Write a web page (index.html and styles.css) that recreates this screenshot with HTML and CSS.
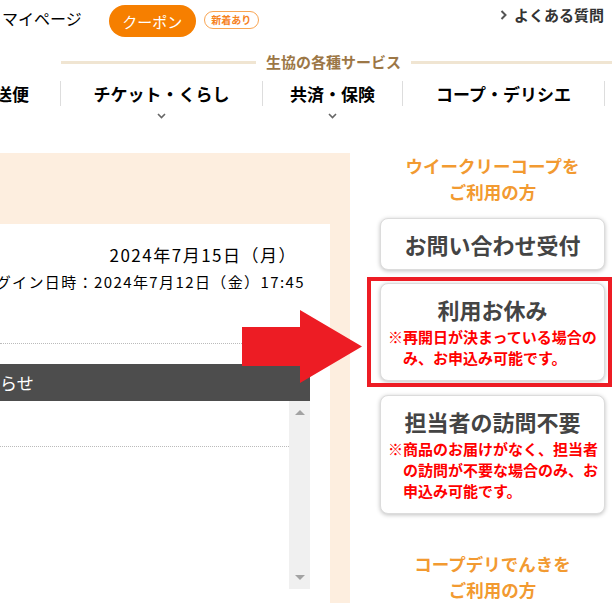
FILE: index.html
```html
<!DOCTYPE html>
<html lang="ja">
<head>
<meta charset="utf-8">
<title>マイページ</title>
<link rel="stylesheet" href="styles.css">
</head>
<body>
<header class="site-header">
  <div class="top">
    <a class="mypage" href="#">マイページ</a>
    <a class="coupon" href="#">クーポン</a>
    <span class="badge">新着あり</span>
    <a class="faq" href="#"><svg class="faq-chev" width="7" height="10" viewBox="0 0 7 10"><polyline points="1.5,1 5.5,5 1.5,9" fill="none" stroke="#555" stroke-width="2"/></svg>よくある質問</a>
  </div>
  <div class="svc-head">
    <span class="svc-line l"></span>
    <span class="svc-title">生協の各種サービス</span>
    <span class="svc-line r"></span>
  </div>
  <ul class="svc-list">
    <li class="svc cut"><span class="svc-label">配送便</span></li>
    <li class="svc w1"><span class="svc-label">チケット・くらし</span><svg class="dd" width="9" height="6" viewBox="0 0 9 6"><polyline points="1,1 4.5,4.5 8,1" fill="none" stroke="#666" stroke-width="1.6"/></svg></li>
    <li class="svc w2"><span class="svc-label">共済・保険</span><svg class="dd" width="9" height="6" viewBox="0 0 9 6"><polyline points="1,1 4.5,4.5 8,1" fill="none" stroke="#666" stroke-width="1.6"/></svg></li>
    <li class="svc w3"><span class="svc-label">コープ・デリシエ</span></li>
    <li class="svc rest"><span class="svc-label"></span></li>
  </ul>
</header>
<main class="main">
  <section class="left">
    <div class="panel">
      <div class="dates">
        <p class="date">2024年7月15日（月）</p>
        <p class="login"><span>前回ログイン日時：2024年7月12日（金）17:45</span></p>
      </div>
      <div class="news-head">お知らせ</div>
      <div class="news-body">
        <ul class="news-list">
          <li></li>
        </ul>
        <div class="scrollbar">
          <span class="sb-up"></span>
          <span class="sb-down"></span>
        </div>
      </div>
    </div>
  </section>
  <aside class="right">
    <p class="rhead">ウイークリーコープを<br>ご利用の方</p>
    <a class="card simple" href="#"><span class="card-title">お問い合わせ受付</span></a>
    <a class="card note-card first" href="#">
      <span class="card-title">利用お休み</span>
      <span class="note">※再開日が決まっている場合の<br>み、お申込み可能です。</span>
    </a>
    <a class="card note-card second" href="#">
      <span class="card-title">担当者の訪問不要</span>
      <span class="note">※商品のお届けがなく、担当者<br>の訪問が不要な場合のみ、お<br>申込み可能です。</span>
    </a>
    <p class="rhead lower">コープデリでんきを<br>ご利用の方</p>
  </aside>
  <svg class="arrow" width="120" height="73" viewBox="0 0 120 73"><polygon points="0,17 58,17 58,0 120,36.5 58,73 58,56 0,56" fill="#ed1c24"/></svg>
  <div class="highlight"></div>
</main>
</body>
</html>
```

FILE: styles.css
```css
* { box-sizing: border-box; margin: 0; padding: 0; }
html, body { width: 612px; height: 603px; overflow: hidden; }
body {
  font-family: "Noto Sans CJK JP", "Noto Sans", sans-serif;
  color: #000;
  background: #fff;
}
ul { list-style: none; }
a { color: inherit; text-decoration: none; }

.site-header { height: 153px; }

.top { display: flex; align-items: flex-start; height: 53px; }
.mypage { font-size: 16px; line-height: 20px; margin: 8px 0 0 2px; }
.coupon {
  margin: 5px 0 0 27px;
  width: 87px; height: 32px;
  border-radius: 16px;
  background: #f67f00; color: #fff;
  font-size: 15px;
  display: flex; align-items: center; justify-content: center;
}
.badge {
  margin: 11px 0 0 8px;
  width: 55px; height: 18px;
  border: 1.5px solid #f9a552; border-radius: 9px;
  color: #f6821e; font-size: 10px; font-weight: 700; line-height: 14px;
  display: flex; align-items: center; justify-content: center;
}
.faq {
  margin: 6px 8px 0 auto;
  display: flex; align-items: center; gap: 7px;
  font-size: 15px; font-weight: 700; line-height: 18px; color: #333;
}

.svc-head { display: flex; align-items: center; height: 18px; }
.svc-line { height: 3px; background: #f0e5d2; }
.svc-line.l { width: 195px; margin-left: 61px; flex: none; }
.svc-line.r { flex: 1; }
.svc-title { margin: 0 10px; font-size: 15px; font-weight: 700; color: #9c7746; line-height: 18px; white-space: nowrap; }

.svc-list { display: flex; margin-top: 10px; }
.svc { display: flex; flex-direction: column; align-items: center; flex: none; }
.svc-label {
  height: 25px; width: 100%;
  border-left: 1px solid #dddddd;
  display: flex; justify-content: center; align-items: center;
  font-size: 17px; font-weight: 700; line-height: 25px; white-space: nowrap;
}
.svc.cut { width: 60px; overflow: hidden; }
.svc.cut .svc-label { border-left: none; justify-content: flex-end; padding-right: 31px; }
.svc.w1 { width: 202px; }
.svc.w2 { width: 140px; }
.svc.w3 { width: 202px; }
.svc.rest { flex: 1; }
.dd { margin-top: 7px; display: block; }

.main { position: relative; display: flex; height: 450px; }

.left { width: 350px; flex: none; background: #fdeedf; padding: 71px 20px 0 0; }
.panel { background: #fff; height: 100%; padding-right: 20px; }
.dates { padding: 19px 0 50px; border-bottom: 1px dotted #bbbbbb; }
.date { text-align: right; padding-right: 13px; font-size: 17px; line-height: 24px; letter-spacing: 1.5px; }
.login {
  display: flex; justify-content: flex-end;
  margin-top: 4px; padding-right: 5px;
  font-size: 15px; line-height: 22px; white-space: nowrap; letter-spacing: 1.4px;
}
.news-head {
  margin-top: 20px; height: 37px;
  background: #4d4d4d; color: #fff;
  font-size: 17px; line-height: 37px;
  text-indent: -34px; white-space: nowrap; overflow: hidden;
}
.news-body { display: flex; height: 188px; }
.news-list { flex: 1; }
.news-list li { height: 46px; border-bottom: 1px dotted #bbbbbb; }
.scrollbar {
  width: 21px; background: #f0f0f0;
  display: flex; flex-direction: column; justify-content: space-between; align-items: center;
  padding: 9px 0;
}
.sb-up { width: 0; height: 0; border-left: 5px solid transparent; border-right: 5px solid transparent; border-bottom: 5px solid #a3a3a3; }
.sb-down { width: 0; height: 0; border-left: 5px solid transparent; border-right: 5px solid transparent; border-top: 5px solid #a3a3a3; }

.right { width: 262px; flex: none; padding-left: 30px; display: flex; flex-direction: column; align-items: flex-start; }
.rhead { width: 225px; text-align: center; color: #f29a31; font-size: 17.5px; font-weight: 700; line-height: 26px; }
.rhead.lower { margin-top: 37px; }
.card {
  width: 225px;
  background: #fff;
  border: 1px solid #dcdcdc; border-radius: 8px;
  box-shadow: 0 1px 4px rgba(0, 0, 0, 0.25);
  display: flex; flex-direction: column; align-items: center;
}
.card-title { font-size: 22px; font-weight: 700; color: #444; line-height: 30px; white-space: nowrap; }
.card.simple { height: 54px; margin-top: 13px; justify-content: center; }
.card.note-card { padding: 10px 0 12px; }
.card.first { margin-top: 13px; }
.card.second { margin-top: 14px; }
.note {
  align-self: stretch;
  text-align: left; color: #ff0000;
  font-size: 15px; font-weight: 700; line-height: 21px;
  padding-left: 22px; text-indent: -15px; margin-top: 2px;
  white-space: nowrap;
}

.arrow { position: absolute; left: 242px; top: 157px; }
.highlight {
  position: absolute; left: 367px; top: 124px;
  width: 245px; height: 110px;
  border: 4px solid #ed1c24;
}
```
